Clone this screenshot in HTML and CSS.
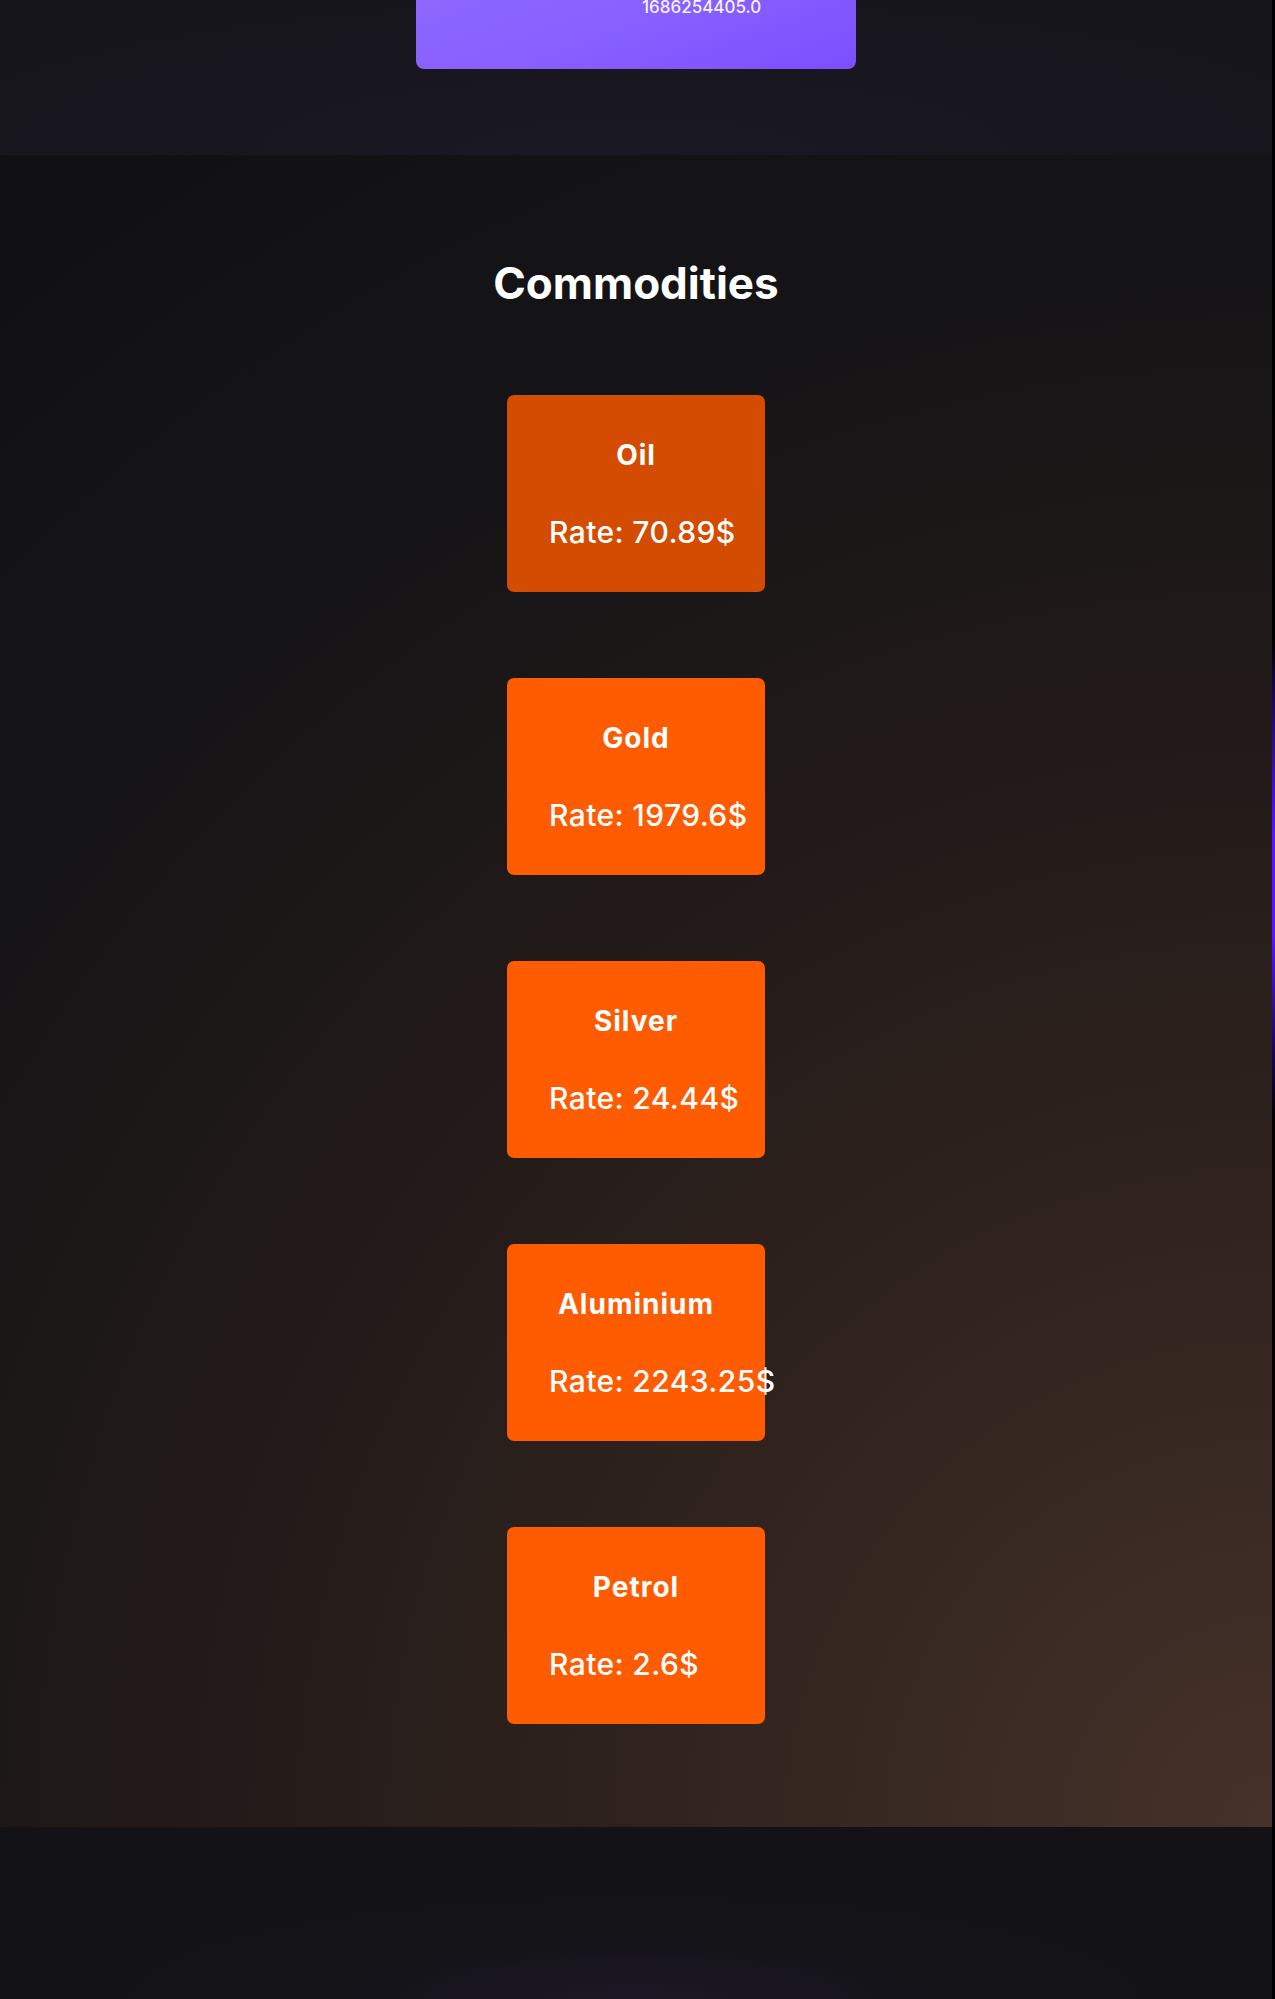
FILE: index.html
```html
<!DOCTYPE html>
<html lang="en">
<head>
<meta charset="utf-8">
<title>Commodities</title>
<link rel="stylesheet" href="styles.css">
</head>
<body>
<div class="page">
  <header class="hero">
    <div class="stat-card">
      <span class="stat-value">1686254405.0</span>
    </div>
  </header>
  <section class="commodities">
    <h2 class="section-title">Commodities</h2>
    <div class="card-list">
      <div class="card card-active">
        <h3 class="card-name">Oil</h3>
        <p class="card-rate">Rate: 70.89$</p>
      </div>
      <div class="card">
        <h3 class="card-name">Gold</h3>
        <p class="card-rate">Rate: 1979.6$</p>
      </div>
      <div class="card">
        <h3 class="card-name">Silver</h3>
        <p class="card-rate">Rate: 24.44$</p>
      </div>
      <div class="card">
        <h3 class="card-name">Aluminium</h3>
        <p class="card-rate">Rate: 2243.25$</p>
      </div>
      <div class="card">
        <h3 class="card-name">Petrol</h3>
        <p class="card-rate">Rate: 2.6$</p>
      </div>
    </div>
  </section>
  <footer class="footer"></footer>
  <div class="edge-glow"></div>
</div>
</body>
</html>
```
FILE: styles.css
```css
html {
  background: #000;
}
body {
  margin: 0;
  font-family: "Inter", "Noto Sans", sans-serif;
  color: #fff;
  background: #000;
}
.page {
  width: 1272px;
  position: relative;
}
.hero {
  height: 155px;
  background: radial-gradient(ellipse 70% 120% at 50% 100%, #1a1823 0%, #16151b 100%);
  display: flex;
  justify-content: center;
  align-items: flex-start;
}
.stat-card {
  width: 440px;
  height: 69px;
  box-sizing: border-box;
  padding-left: 226px;
  border-radius: 0 0 8px 8px;
  background: linear-gradient(160deg, #8d67ff 0%, #8760ff 45%, #7b4fff 100%);
}
.stat-value {
  display: block;
  font-size: 17px;
  line-height: 14px;
  font-weight: 500;
  color: #f4f0ff;
}
.commodities {
  background: radial-gradient(circle at 100% 100%, #45322a 0%, #33251f 25%, #231b19 50%, #151416 75%, #111113 95%);
  padding: 102px 0 103px;
}
.section-title {
  margin: 0 0 86px;
  text-align: center;
  font-size: 44px;
  line-height: 52px;
  font-weight: 700;
}
.card-list {
  display: flex;
  flex-direction: column;
  align-items: center;
  gap: 86px;
}
.card {
  width: 258px;
  height: 197px;
  box-sizing: border-box;
  padding: 43px 0 0 42px;
  border-radius: 7px;
  background: #ff5b00;
  display: flex;
  flex-direction: column;
}
.card-active {
  background: #d44c01;
}
.card-name {
  margin: 0 0 42px -42px;
  text-align: center;
  font-size: 28px;
  line-height: 34px;
  font-weight: 650;
  letter-spacing: 1px;
}
.card-rate {
  margin: 0;
  font-size: 30px;
  line-height: 36px;
  font-weight: 500;
  white-space: nowrap;
  letter-spacing: 0.4px;
}
.footer {
  height: 174px;
  background: radial-gradient(ellipse 40% 60% at 50% 100%, #1c1725 0%, #151419 60%, #131216 100%);
}
.edge-glow {
  position: absolute;
  right: -3px;
  top: 640px;
  width: 3px;
  height: 480px;
  background: linear-gradient(180deg, #000 0%, #1a0560 12%, #5a12ff 40%, #5a12ff 62%, #1a0560 85%, #000 100%);
}
```
